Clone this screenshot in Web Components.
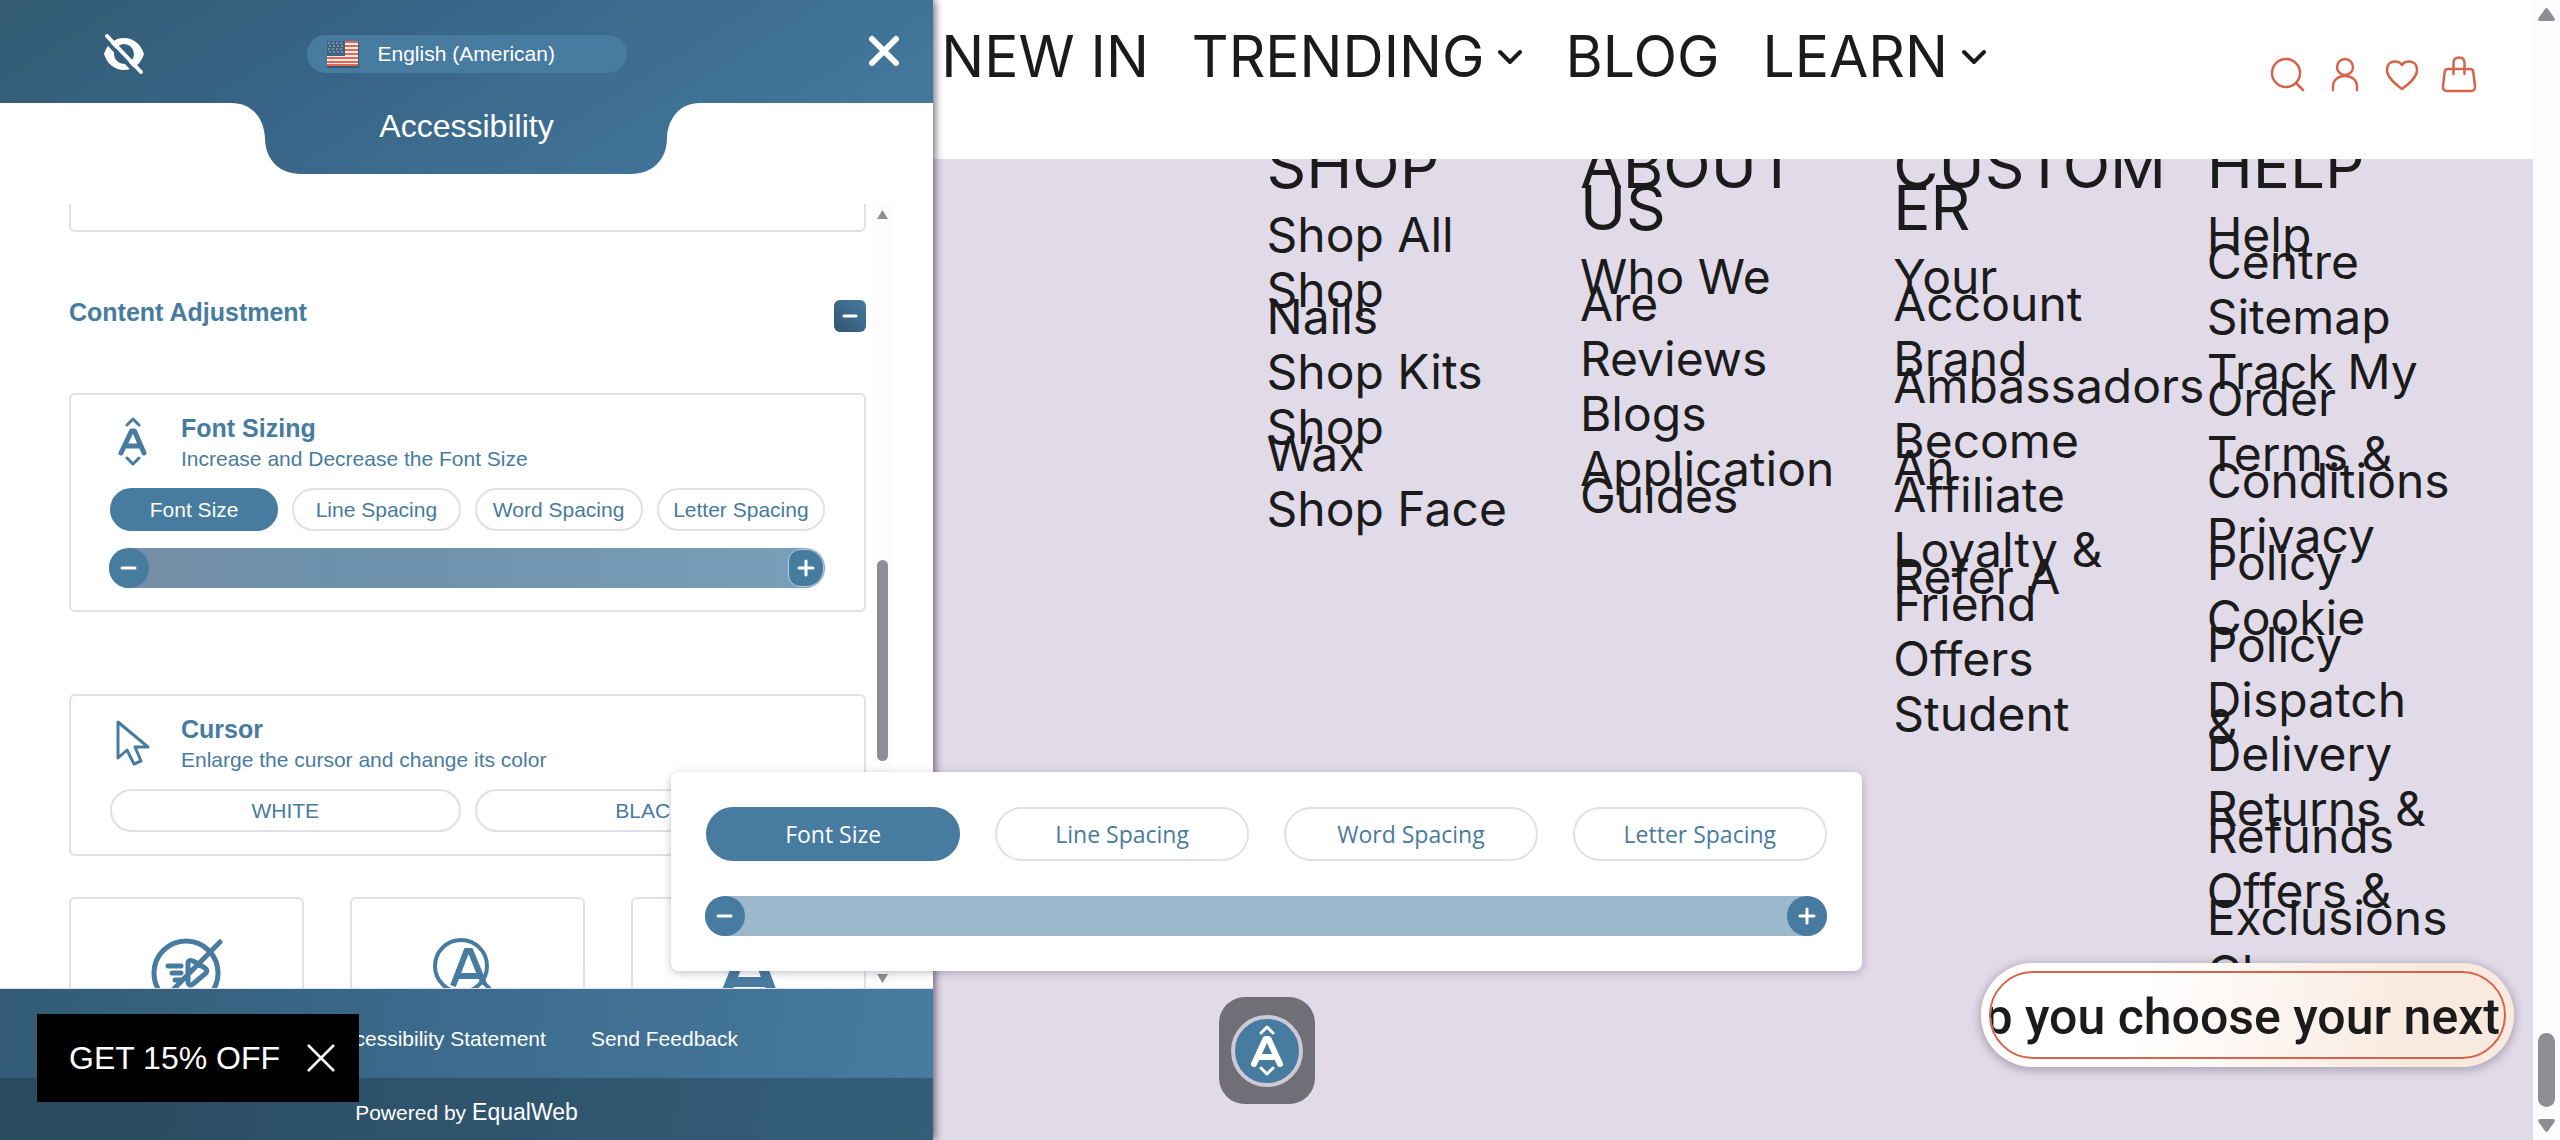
<!DOCTYPE html>
<html lang="en">
<head>
  <meta charset="utf-8">
  <title>Accessibility</title>
  <style>
    body {
      margin: 0;
      height: 100vh;
      overflow: hidden;
      background: #e1dae8;
      font-family: "Liberation Sans", Arial, sans-serif;
    }
  </style>
</head>
<body>
  <app-page></app-page>

  <script>
    class SiteHeader extends HTMLElement {
      constructor() {
        super();
        this.attachShadow({ mode: 'open' }).innerHTML = `
          <style>
            :host {
              display: flex;
              justify-content: space-between;
              align-items: flex-start;
              box-sizing: border-box;
              height: 159px;
              padding: 0 54px 0 37%;
              background: #fff;
            }
            nav {
              display: flex;
              gap: 43px;
              padding: 27px 0 0 4px;
            }
            nav a {
              display: flex;
              align-items: center;
              gap: 14px;
              color: #1b1b1b;
              font: 57px/60px Inter, sans-serif;
              text-decoration: none;
              white-space: nowrap;
            }
            .icons {
              display: flex;
              gap: 17px;
              padding-top: 55px;
            }
            .icons button {
              width: 40px;
              height: 40px;
              padding: 0;
              border: 0;
              background: none;
            }
            svg {
              display: block;
              fill: none;
              stroke-linecap: round;
              stroke-linejoin: round;
            }
            .icons svg {
              stroke: #d4654a;
              stroke-width: 2.5;
            }
            nav svg {
              stroke: #1b1b1b;
              stroke-width: 4;
            }
          </style>
          <nav>
            <a href="#">NEW IN</a>
            <a href="#">TRENDING <svg width="24" height="16" viewBox="0 0 24 16"><path d="M2 3l10 10L22 3"/></svg></a>
            <a href="#">BLOG</a>
            <a href="#">LEARN <svg width="24" height="16" viewBox="0 0 24 16"><path d="M2 3l10 10L22 3"/></svg></a>
          </nav>
          <div class="icons">
            <button aria-label="Search"><svg width="40" height="40" viewBox="0 0 40 40"><circle cx="18" cy="18" r="14"/><path d="M28 28l7 7"/></svg></button>
            <button aria-label="Account"><svg width="40" height="40" viewBox="0 0 40 40"><circle cx="20" cy="12" r="8"/><path d="M8 35v-3c0-7 5-11 12-11s12 4 12 11v3"/></svg></button>
            <button aria-label="Wishlist"><svg width="40" height="40" viewBox="0 0 40 40"><path d="M20 34C12 28 5 22 5 15c0-6 4-8.500 8-8.500 3 0 5.500 1 7 3.500 1.500-2.500 4-3.500 7-3.500 4 0 8 2.500 8 8.500 0 7-7 13-15 19z"/></svg></button>
            <button aria-label="Bag"><svg width="40" height="40" viewBox="0 0 40 40"><path d="M9 14h22q3 0 3.300 3l1.700 14q.500 5-4 5H8q-4.500 0-4-5l1.700-14Q6 14 9 14zM14.500 19V8q0-5.500 5.500-5.500T25.500 8v11"/></svg></button>
          </div>
        `;
      }
    }
    customElements.define('site-header', SiteHeader);

    class LinkColumn extends HTMLElement {
      constructor() {
        super();
        this.shadowDom = this.attachShadow({ mode: 'open' });
      }

      set column(column) {
        this._column = column;
        this.render();
      }

      render() {
        const links = this._column.links.map((text) => `<li><a href="#">${text}</a></li>`).join('');
        this.shadowDom.innerHTML = `
          <style>
            :host {
              display: block;
              color: #1b1b1b;
              font-family: Inter, sans-serif;
            }
            h2 {
              margin: 0 0 34px;
              font-size: 62px;
              line-height: 42px;
              font-weight: 400;
              white-space: pre;
            }
            ul {
              display: flex;
              flex-direction: column;
              gap: 28px;
              margin: 0;
              padding: 0;
              list-style: none;
              font-size: 48px;
              line-height: 27px;
            }
            li {
              display: block;
            }
            a {
              display: block;
              color: inherit;
              text-decoration: none;
              white-space: pre;
            }
          </style>
          <h2>${this._column.title}</h2>
          <ul>${links}</ul>
        `;
      }
    }
    customElements.define('link-column', LinkColumn);

    class SiteFooter extends HTMLElement {
      constructor() {
        super();
        this.attachShadow({ mode: 'open' }).innerHTML = `
          <style>
            :host {
              display: block;
              flex: 1;
              min-height: 0;
              overflow: hidden;
            }
            .columns {
              display: grid;
              grid-template-columns: repeat(4, minmax(0, 1fr));
              gap: 47px;
              margin-top: -14px;
              padding: 0 60px 0 50%;
            }
          </style>
          <div class="columns"></div>
        `;
      }

      connectedCallback() {
        const columns = [
          { title: 'SHOP', links: ['Shop All', 'Shop\nNails', 'Shop Kits', 'Shop\nWax', 'Shop Face'] },
          { title: 'ABOUT\nUS', links: ['Who We\nAre', 'Reviews', 'Blogs', 'Application\nGuides'] },
          { title: 'CUSTOM\nER', links: ['Your\nAccount', 'Brand\nAmbassadors', 'Become\nAn\nAffiliate', 'Loyalty &amp;\nRefer A\nFriend', 'Offers', 'Student'] },
          { title: 'HELP', links: ['Help\nCentre', 'Sitemap', 'Track My\nOrder', 'Terms &amp;\nConditions', 'Privacy\nPolicy', 'Cookie\nPolicy', 'Dispatch\n&amp;\nDelivery', 'Returns &amp;\nRefunds', 'Offers &amp;\nExclusions', 'Ch'] },
        ];
        const grid = this.shadowRoot.querySelector('.columns');
        columns.forEach((column) => {
          const element = document.createElement('link-column');
          element.column = column;
          grid.appendChild(element);
        });
      }
    }
    customElements.define('site-footer', SiteFooter);

    class PillButton extends HTMLElement {
      constructor() {
        super();
        this.attachShadow({ mode: 'open' }).innerHTML = `
          <style>
            :host {
              display: block;
              flex: 1;
            }
            button {
              display: block;
              box-sizing: border-box;
              width: 100%;
              height: var(--pill-height, 43px);
              padding: 0;
              border: 2px solid #dfe0ea;
              border-radius: 27px;
              background: #fff;
              color: #477ba0;
              font: inherit;
              white-space: nowrap;
            }
            :host([active]) button {
              border-color: #477ba0;
              background: #477ba0;
              color: #fff;
            }
          </style>
          <button><slot></slot></button>
        `;
      }
    }
    customElements.define('pill-button', PillButton);

    class StepSlider extends HTMLElement {
      constructor() {
        super();
        this.attachShadow({ mode: 'open' }).innerHTML = `
          <style>
            :host {
              display: flex;
              height: 40px;
              margin-left: -1px;
              border-radius: 20px;
              background: var(--track, #9cb8cd);
            }
            button {
              width: 40px;
              height: 40px;
              padding: 0;
              border: 0;
              border-radius: 20px;
              background: #477ba0;
            }
            :host([focused]) .plus {
              width: 36px;
              height: 38px;
              margin: 1px;
              border: 1px solid #b9d0e2;
              border-radius: 12px 18px 18px 12px;
            }
            input {
              flex: 1;
              min-width: 0;
              margin: 0;
              appearance: none;
              background: none;
            }
            input::-webkit-slider-thumb {
              appearance: none;
              width: 0;
              height: 0;
            }
            svg {
              display: block;
              margin: auto;
              stroke: #fff;
              stroke-width: 3;
              stroke-linecap: round;
            }
          </style>
          <button aria-label="Decrease"><svg width="20" height="20" viewBox="0 0 20 20"><path d="M3 10h13"/></svg></button>
          <input type="range" min="0" max="10" value="0" aria-label="Level">
          <button class="plus" aria-label="Increase"><svg width="20" height="20" viewBox="0 0 20 20"><path d="M3 10h14M10 3v14"/></svg></button>
        `;
      }
    }
    customElements.define('step-slider', StepSlider);

    class SettingCard extends HTMLElement {
      constructor() {
        super();
        this.attachShadow({ mode: 'open' }).innerHTML = `
          <style>
            :host {
              display: block;
              padding: 18px 39px 22px;
              border: 2px solid #dfe0ea;
              border-radius: 6px;
              color: #477ba0;
            }
            header {
              display: grid;
              grid-template-columns: 71px 1fr;
              margin-bottom: 13px;
            }
            ::slotted([slot="icon"]) {
              margin-top: 4px;
            }
            h3 {
              margin: 0;
              font-size: 25px;
              line-height: 30px;
            }
            p {
              margin: 0;
              line-height: 32px;
            }
            .options {
              display: flex;
              gap: 14px;
            }
            ::slotted(step-slider) {
              margin-top: 17px;
            }
          </style>
          <header>
            <slot name="icon"></slot>
            <div>
              <h3>${this.getAttribute('heading')}</h3>
              <p>${this.getAttribute('text')}</p>
            </div>
          </header>
          <div class="options"><slot></slot></div>
          <slot name="slider"></slot>
        `;
      }
    }

    class AccessPanel extends HTMLElement {
      constructor() {
        super();
        this.attachShadow({ mode: 'open' }).innerHTML = `
          <style>
            :host {
              position: absolute;
              top: 0;
              bottom: 0;
              left: 0;
              display: flex;
              flex-direction: column;
              width: 933px;
              max-width: 100%;
              background: #fff;
              box-shadow: 2px 0 8px rgba(60, 50, 75, 0.75);
              font-size: 21px;
              color: #477ba0;
            }
            .top {
              position: relative;
              height: 174px;
              color: #fff;
            }
            .shape {
              position: absolute;
              inset: 0;
              width: 100%;
              height: 100%;
            }
            .bar {
              position: relative;
              display: grid;
              grid-template-columns: 1fr 320px 1fr;
              align-items: center;
              height: 108px;
            }
            .bar button {
              padding: 0;
              border: 0;
              background: none;
              color: inherit;
              font: inherit;
            }
            .bar .hide {
              justify-self: start;
              margin-left: 102px;
            }
            .bar .close {
              justify-self: end;
              margin-right: 32px;
              margin-bottom: 6px;
            }
            .bar .language {
              display: flex;
              align-items: center;
              gap: 19px;
              height: 38px;
              padding-left: 19px;
              border-radius: 19px;
              background: #477ba0;
            }
            svg {
              display: block;
            }
            h1 {
              position: relative;
              margin: 0;
              font-size: 32px;
              line-height: 36px;
              font-weight: 400;
              text-align: center;
            }
            .scroll {
              display: flex;
              flex: 1;
              min-height: 0;
              gap: 7px;
              margin-top: 30px;
              padding: 0 41px 0 69px;
              overflow: hidden;
              border-bottom: 1px solid #dfe0ea;
            }
            .content {
              display: flex;
              flex-direction: column;
              flex: 1;
              min-width: 0;
            }
            .previous {
              flex: none;
              height: 26px;
              border: 2px solid #dfe0ea;
              border-top: 0;
              border-radius: 0 0 6px 6px;
            }
            .section {
              display: flex;
              justify-content: space-between;
              align-items: flex-start;
              margin: 68px 0 61px;
            }
            h2 {
              margin: 0;
              font-size: 25px;
              line-height: 24px;
            }
            .section button {
              width: 32px;
              height: 32px;
              padding: 0;
              border: 0;
              border-radius: 6px;
              background: linear-gradient(45deg, #2f566f, #477ba0);
            }
            .section svg {
              margin: auto;
            }
            setting-card + setting-card {
              margin-top: 82px;
            }
            .tiles {
              display: grid;
              grid-template-columns: repeat(3, 1fr);
              gap: 46px;
              margin-top: 41px;
            }
            .tiles button {
              display: flex;
              justify-content: center;
              align-items: flex-start;
              height: 200px;
              padding: 35px 0 0;
              border: 2px solid #dfe0ea;
              border-radius: 6px;
              background: #fff;
            }
            .track {
              display: flex;
              flex-direction: column;
              align-items: center;
              width: 19px;
              padding-top: 6px;
              box-sizing: border-box;
              background: #fcfcfc;
            }
            .thumb {
              flex: none;
              width: 11px;
              height: 201px;
              margin: 341px 0 213px;
              border-radius: 6px;
              background: #8f8d94;
            }
            .links,
            .powered {
              display: flex;
              align-items: center;
              box-sizing: border-box;
            }
            .links {
              justify-content: flex-end;
              gap: 45px;
              height: 89px;
              padding: 11px 195px 0 0;
              background: linear-gradient(100deg, #335b75, #3a6889 40%, #477ba0);
            }
            .powered {
              justify-content: center;
              gap: 6px;
              height: 62px;
              padding-top: 7px;
              background: linear-gradient(100deg, #294a60, #345e79);
              color: #fff;
            }
            .powered a {
              font-size: 23px;
            }
            a {
              color: #fff;
              text-decoration: none;
            }
          </style>
          <div class="top">
            <svg class="shape" viewBox="0 0 933 174" preserveAspectRatio="none">
              <defs>
                <linearGradient id="blue" x1="0" y1="0" x2="1" y2="0.300">
                  <stop offset="0" stop-color="#335b73"/>
                  <stop offset="0.450" stop-color="#386587"/>
                  <stop offset="1" stop-color="#42769b"/>
                </linearGradient>
              </defs>
              <path fill="url(#blue)" d="M0 0H933V103H700C680 103 668 118 667 138C667 160 652 174 631 174H301C280 174 265 160 265 138C264 118 252 103 231 103H0Z"/>
            </svg>
            <div class="bar">
              <button class="hide" aria-label="Hide interface">
                <svg width="44" height="44" viewBox="0 0 44 44" fill="none">
                  <path fill="#fff" fill-rule="evenodd" d="M2 22C5 12 13 6 22 6s17 6 20 16c-3 10-11 16-20 16S5 32 2 22zM12 22a10 10 0 0 0 20 0a10 10 0 0 0-20 0z"/>
                  <path stroke="#36617e" stroke-width="4" stroke-linecap="round" d="M3 8l33 35"/>
                  <path stroke="#fff" stroke-width="4" stroke-linecap="round" d="M5 4l34 36"/>
                </svg>
              </button>
              <button class="language">
                <svg width="33" height="28" viewBox="0 0 33 28">
                  <path fill="#000" opacity=".25" d="M1 3h32v25H1z"/>
                  <path fill="#f2eef0" d="M1 1h31v25H1z"/>
                  <path stroke="#e0694f" stroke-width="2" d="M1 2h31M1 6h31M1 10h31M1 14h31M1 18h31M1 22h31M1 25h31"/>
                  <path fill="#3d6280" d="M1 1h18v15H1z"/>
                  <path stroke="#a9bccb" stroke-dasharray="2 2" d="M2 3h16M3 6h16M2 9h16M3 12h16"/>
                </svg>
                <span>English (American)</span>
              </button>
              <button class="close" aria-label="Close">
                <svg width="34" height="34" viewBox="0 0 34 34"><path stroke="#fff" stroke-width="6" stroke-linecap="round" d="M5 5l24 24M29 5L5 29"/></svg>
              </button>
            </div>
            <h1>Accessibility</h1>
          </div>

          <div class="scroll">
            <div class="content">
              <div class="previous"></div>
              <div class="section">
                <h2>Content Adjustment</h2>
                <button aria-label="Collapse"><svg width="16" height="16" viewBox="0 0 16 16"><path stroke="#fff" stroke-width="3" stroke-linecap="round" d="M2 8h12"/></svg></button>
              </div>
              <setting-card heading="Font Sizing" text="Increase and Decrease the Font Size">
                <svg slot="icon" width="44" height="52" viewBox="0 0 44 52" fill="none" stroke="#477ba0" stroke-linecap="round" stroke-linejoin="round">
                  <path stroke-width="3" d="M17 8l6-6 6 6M17 41l6 6 6-6"/>
                  <path stroke-width="5" d="M11 36L21.500 14h3L34 36M14.500 29h16"/>
                </svg>
                <pill-button active>Font Size</pill-button>
                <pill-button>Line Spacing</pill-button>
                <pill-button>Word Spacing</pill-button>
                <pill-button>Letter Spacing</pill-button>
                <step-slider slot="slider" focused style="--track: linear-gradient(90deg, #768fa5, #6c90ac 30%, #7a9fbb)"></step-slider>
              </setting-card>
              <setting-card heading="Cursor" text="Enlarge the cursor and change its color">
                <svg slot="icon" width="44" height="52" viewBox="0 0 44 52" fill="none" stroke="#477ba0" stroke-width="3" stroke-linejoin="round">
                  <path d="M8 4v36l9-8 7 14 7-3-6-14h13z"/>
                </svg>
                <pill-button>WHITE</pill-button>
                <pill-button>BLACK</pill-button>
              </setting-card>
              <div class="tiles">
                <button aria-label="Stop animations">
                  <svg width="76" height="76" viewBox="0 0 76 76" fill="none" stroke="#477ba0" stroke-width="5" stroke-linecap="round" stroke-linejoin="round">
                    <circle cx="37" cy="39" r="32"/>
                    <path d="M71 8L12 68M19 32h13M23 39h9M26 46h6M39 30v18q1 5 5 2l13-11q2-3-1-5l-12-7q-5-2-5 3"/>
                  </svg>
                </button>
                <button aria-label="Readable font">
                  <svg width="76" height="76" viewBox="0 0 76 76" fill="none" stroke="#477ba0">
                    <circle stroke-width="4" cx="31" cy="32" r="26"/>
                    <path stroke-width="6" d="M23 52L36.500 17h4L54 50M28 42h22"/>
                    <path stroke-width="4" d="M51 46l18 18"/>
                  </svg>
                </button>
                <button aria-label="Highlight text">
                  <svg width="76" height="76" viewBox="0 0 76 76" fill="none" stroke="#477ba0" stroke-width="10">
                    <path d="M13 64L35 10h8L63 64M20 48h36"/>
                  </svg>
                </button>
              </div>
            </div>
            <div class="track">
              <svg width="11" height="9" viewBox="0 0 11 9" fill="#8f8d94"><path d="M5.500 0L11 9H0z"/></svg>
              <div class="thumb"></div>
              <svg width="11" height="9" viewBox="0 0 11 9" fill="#8f8d94"><path d="M0 0h11L5.500 9z"/></svg>
            </div>
          </div>

          <div class="links">
            <a href="#">Accessibility Statement</a>
            <a href="#">Send Feedback</a>
          </div>
          <div class="powered">Powered by <a href="#">EqualWeb</a></div>
        `;
      }
    }

    class SizingPopup extends HTMLElement {
      constructor() {
        super();
        this.attachShadow({ mode: 'open' }).innerHTML = `
          <style>
            :host {
              position: absolute;
              right: 0;
              bottom: 169px;
              left: 0;
              box-sizing: border-box;
              width: 47%;
              margin: 0 auto;
              padding: 35px;
              border-radius: 8px;
              background: #fff;
              box-shadow: 0 2px 8px rgba(60, 50, 75, 0.3);
              font: 23px "Open Sans", sans-serif;
              --pill-height: 54px;
            }
            .options {
              display: flex;
              gap: 35px;
              margin-bottom: 35px;
            }
          </style>
          <div class="options">
            <pill-button active>Font Size</pill-button>
            <pill-button>Line Spacing</pill-button>
            <pill-button>Word Spacing</pill-button>
            <pill-button>Letter Spacing</pill-button>
          </div>
          <step-slider></step-slider>
        `;
      }
    }

    class SizingToggle extends HTMLElement {
      constructor() {
        super();
        this.attachShadow({ mode: 'open' }).innerHTML = `
          <style>
            :host {
              position: absolute;
              right: 0;
              bottom: 36px;
              left: 0;
              width: 96px;
              margin: 0 auto;
            }
            button {
              display: flex;
              align-items: center;
              justify-content: center;
              width: 96px;
              height: 107px;
              padding: 0;
              border: 0;
              border-radius: 26px;
              background: #706e76;
            }
          </style>
          <button aria-label="Font sizing">
            <svg width="72" height="72" viewBox="0 0 72 72" fill="none" stroke="#fff" stroke-linecap="round" stroke-linejoin="round">
              <circle cx="36" cy="36" r="34" fill="#477ba0" stroke="#cfc9d7" stroke-width="4"/>
              <path stroke-width="3" d="M30 18l6-6 6 6M30 53l6 6 6-6"/>
              <path stroke-width="6" d="M23 49L34.500 24h3L49 49M27 42h18"/>
            </svg>
          </button>
        `;
      }
    }
    customElements.define('sizing-toggle', SizingToggle);

    class PromoTab extends HTMLElement {
      constructor() {
        super();
        this.attachShadow({ mode: 'open' }).innerHTML = `
          <style>
            :host {
              position: absolute;
              bottom: 38px;
              left: 37px;
              display: flex;
              align-items: center;
              gap: 26px;
              height: 88px;
              padding: 0 23px 0 32px;
              background: #000;
              font-size: 32px;
            }
            button {
              padding: 0;
              border: 0;
              background: none;
              color: #fff;
              font: inherit;
            }
            svg {
              display: block;
            }
          </style>
          <button><slot></slot></button>
          <button aria-label="Dismiss"><svg width="30" height="30" viewBox="0 0 30 30"><path stroke="#fff" stroke-width="2.500" d="M2 2l26 26M28 2L2 28"/></svg></button>
        `;
      }
    }
    customElements.define('promo-tab', PromoTab);

    class ChatBubble extends HTMLElement {
      constructor() {
        super();
        this.attachShadow({ mode: 'open' }).innerHTML = `
          <style>
            :host {
              position: absolute;
              right: 19px;
              bottom: 73px;
              box-sizing: border-box;
              width: 533px;
              padding: 8px;
              border-radius: 52px;
              background: linear-gradient(100deg, #fff 30%, #f9eadf 80%);
              box-shadow: 0 2px 8px 2px rgba(60, 50, 75, 0.3);
            }
            button {
              display: flex;
              justify-content: flex-end;
              align-items: center;
              box-sizing: border-box;
              width: 100%;
              height: 88px;
              padding: 4px 4px 0 0;
              overflow: hidden;
              border: 2px solid #d4654a;
              border-radius: 44px;
              background: none;
              color: #1b1b1b;
              font: 500 50px Roboto, sans-serif;
              white-space: nowrap;
            }
          </style>
          <button><slot></slot></button>
        `;
      }
    }
    customElements.define('chat-bubble', ChatBubble);

    class PageScrollbar extends HTMLElement {
      constructor() {
        super();
        this.attachShadow({ mode: 'open' }).innerHTML = `
          <style>
            :host {
              display: flex;
              flex-direction: column;
              justify-content: flex-end;
              align-items: center;
              gap: 12px;
              box-sizing: border-box;
              width: 27px;
              padding: 8px 0;
              background: #fcfcfc;
            }
            .up {
              margin-bottom: auto;
            }
            .thumb {
              width: 17px;
              height: 74px;
              border-radius: 9px;
              background: #8f8d94;
            }
          </style>
          <svg class="up" width="17" height="13" viewBox="0 0 17 13" fill="#8f8d94"><path d="M7 1q1.500-2 3 0l6.500 9q1 3-1.500 3H2q-2.500 0-1.500-3z"/></svg>
          <div class="thumb"></div>
          <svg width="17" height="13" viewBox="0 0 17 13" fill="#8f8d94"><path d="M7 12q1.500 2 3 0l6.500-9q1-3-1.500-3H2Q-.500 0 .500 3z"/></svg>
        `;
      }
    }
    customElements.define('page-scrollbar', PageScrollbar);

    class AppPage extends HTMLElement {
      constructor() {
        super();
        this.attachShadow({ mode: 'open' }).innerHTML = `
          <style>
            :host {
              display: flex;
              height: 100%;
            }
            main {
              position: relative;
              display: flex;
              flex-direction: column;
              flex: 1;
              min-width: 0;
              overflow: hidden;
            }
          </style>
          <main>
            <site-header></site-header>
            <site-footer></site-footer>
            <access-panel></access-panel>
            <sizing-popup></sizing-popup>
            <sizing-toggle></sizing-toggle>
            <promo-tab>GET 15% OFF</promo-tab>
            <chat-bubble>p you choose your next</chat-bubble>
          </main>
          <page-scrollbar></page-scrollbar>
        `;
      }
    }

    customElements.define('setting-card', SettingCard);
    customElements.define('access-panel', AccessPanel);
    customElements.define('sizing-popup', SizingPopup);
    customElements.define('app-page', AppPage);
  </script>
</body>
</html>
